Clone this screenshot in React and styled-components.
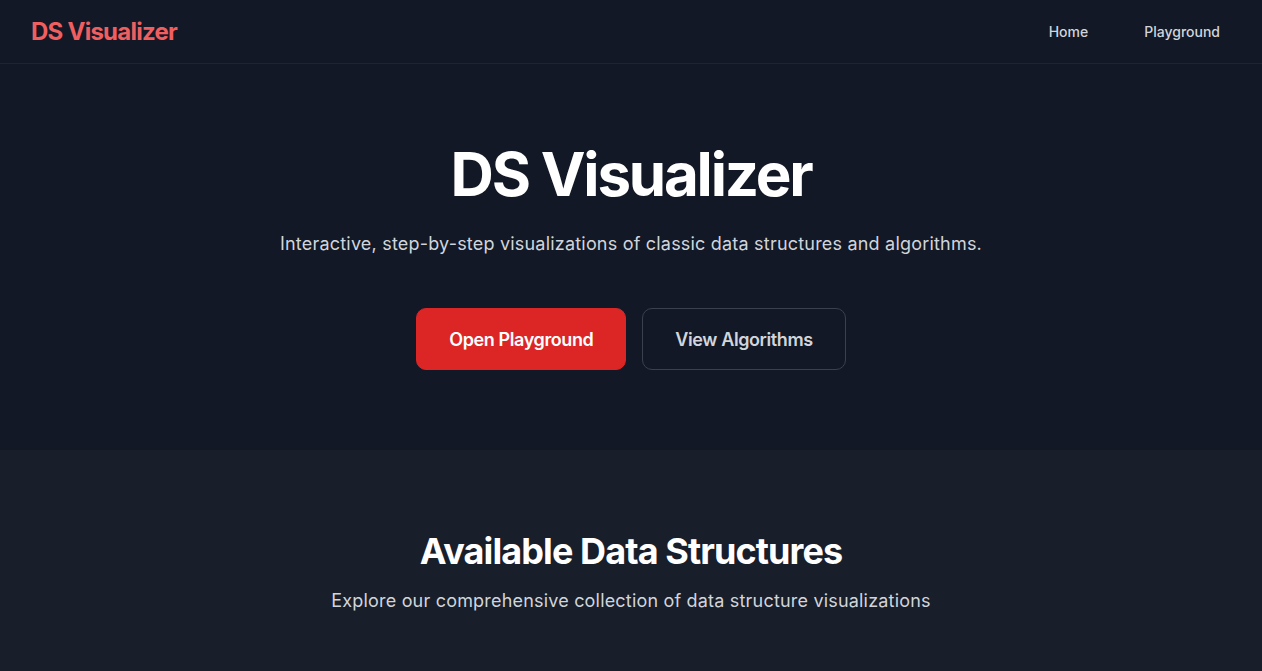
import React from 'react';
import styled, { createGlobalStyle } from 'styled-components';

const GlobalStyle = createGlobalStyle`
  * {
    box-sizing: border-box;
  }
  body {
    margin: 0;
    background-color: #121826;
    font-family: Inter, "Noto Sans", sans-serif;
    -webkit-font-smoothing: antialiased;
  }
`;

const App = () => {
  return (
    <>
      <GlobalStyle />
      <Page>
        <Header>
          <Logo>DS Visualizer</Logo>
          <Nav>
            <NavLink href="#">Home</NavLink>
            <NavLink href="#">Playground</NavLink>
          </Nav>
        </Header>
        <Hero>
          <Title>DS Visualizer</Title>
          <Subtitle>
            Interactive, step-by-step visualizations of classic data structures and algorithms.
          </Subtitle>
          <Actions>
            <Button primary>Open Playground</Button>
            <Button>View Algorithms</Button>
          </Actions>
        </Hero>
        <Section>
          <SectionTitle>Available Data Structures</SectionTitle>
          <SectionText>Explore our comprehensive collection of data structure visualizations</SectionText>
        </Section>
      </Page>
    </>
  );
};

const Page = styled.div`
  min-height: 100vh;
  display: flex;
  flex-direction: column;
  background-color: #121826;
`;

const Header = styled.header`
  height: 64px;
  display: flex;
  align-items: center;
  justify-content: space-between;
  padding: 0 30px 0 31px;
  border-bottom: 1px solid #1f2530;
`;

const Logo = styled.div`
  font-size: 24px;
  font-weight: 700;
  color: #f05f60;
  letter-spacing: -0.75px;
`;

const Nav = styled.nav`
  display: flex;
  gap: 32px;
`;

const NavLink = styled.a`
  font-size: 14px;
  font-weight: 500;
  color: #d1d5db;
  text-decoration: none;
  padding: 8px 12px;
`;

const Hero = styled.section`
  display: flex;
  flex-direction: column;
  align-items: center;
  padding: 80px 24px 80px;
  text-align: center;
`;

const Title = styled.h1`
  margin: 0 0 26px;
  font-size: 60px;
  line-height: 60px;
  font-weight: 700;
  color: #ffffff;
  letter-spacing: -2.2px;
`;

const Subtitle = styled.p`
  margin: 0 0 50px;
  font-size: 18px;
  line-height: 28px;
  color: #d1d5db;
  letter-spacing: 0.2px;
`;

const Actions = styled.div`
  display: flex;
  gap: 16px;
`;

const Button = styled.button`
  height: 62px;
  padding: 0 32px;
  border-radius: 10px;
  font-family: inherit;
  font-size: 18px;
  font-weight: 600;
  letter-spacing: -0.4px;
  cursor: pointer;
  background-color: ${p => (p.primary ? '#dc2626' : 'transparent')};
  color: ${p => (p.primary ? '#ffffff' : '#d1d5db')};
  border: 1px solid ${p => (p.primary ? '#dc2626' : '#3a404c')};
`;

const Section = styled.section`
  flex: 1;
  display: flex;
  flex-direction: column;
  align-items: center;
  padding: 81px 24px 80px;
  background-color: #181e2a;
  text-align: center;
`;

const SectionTitle = styled.h2`
  margin: 0 0 16px;
  font-size: 36px;
  line-height: 40px;
  font-weight: 700;
  color: #ffffff;
  letter-spacing: -0.9px;
`;

const SectionText = styled.p`
  margin: 0;
  font-size: 18px;
  line-height: 28px;
  color: #d1d5db;
  letter-spacing: 0.19px;
`;

export default App;
